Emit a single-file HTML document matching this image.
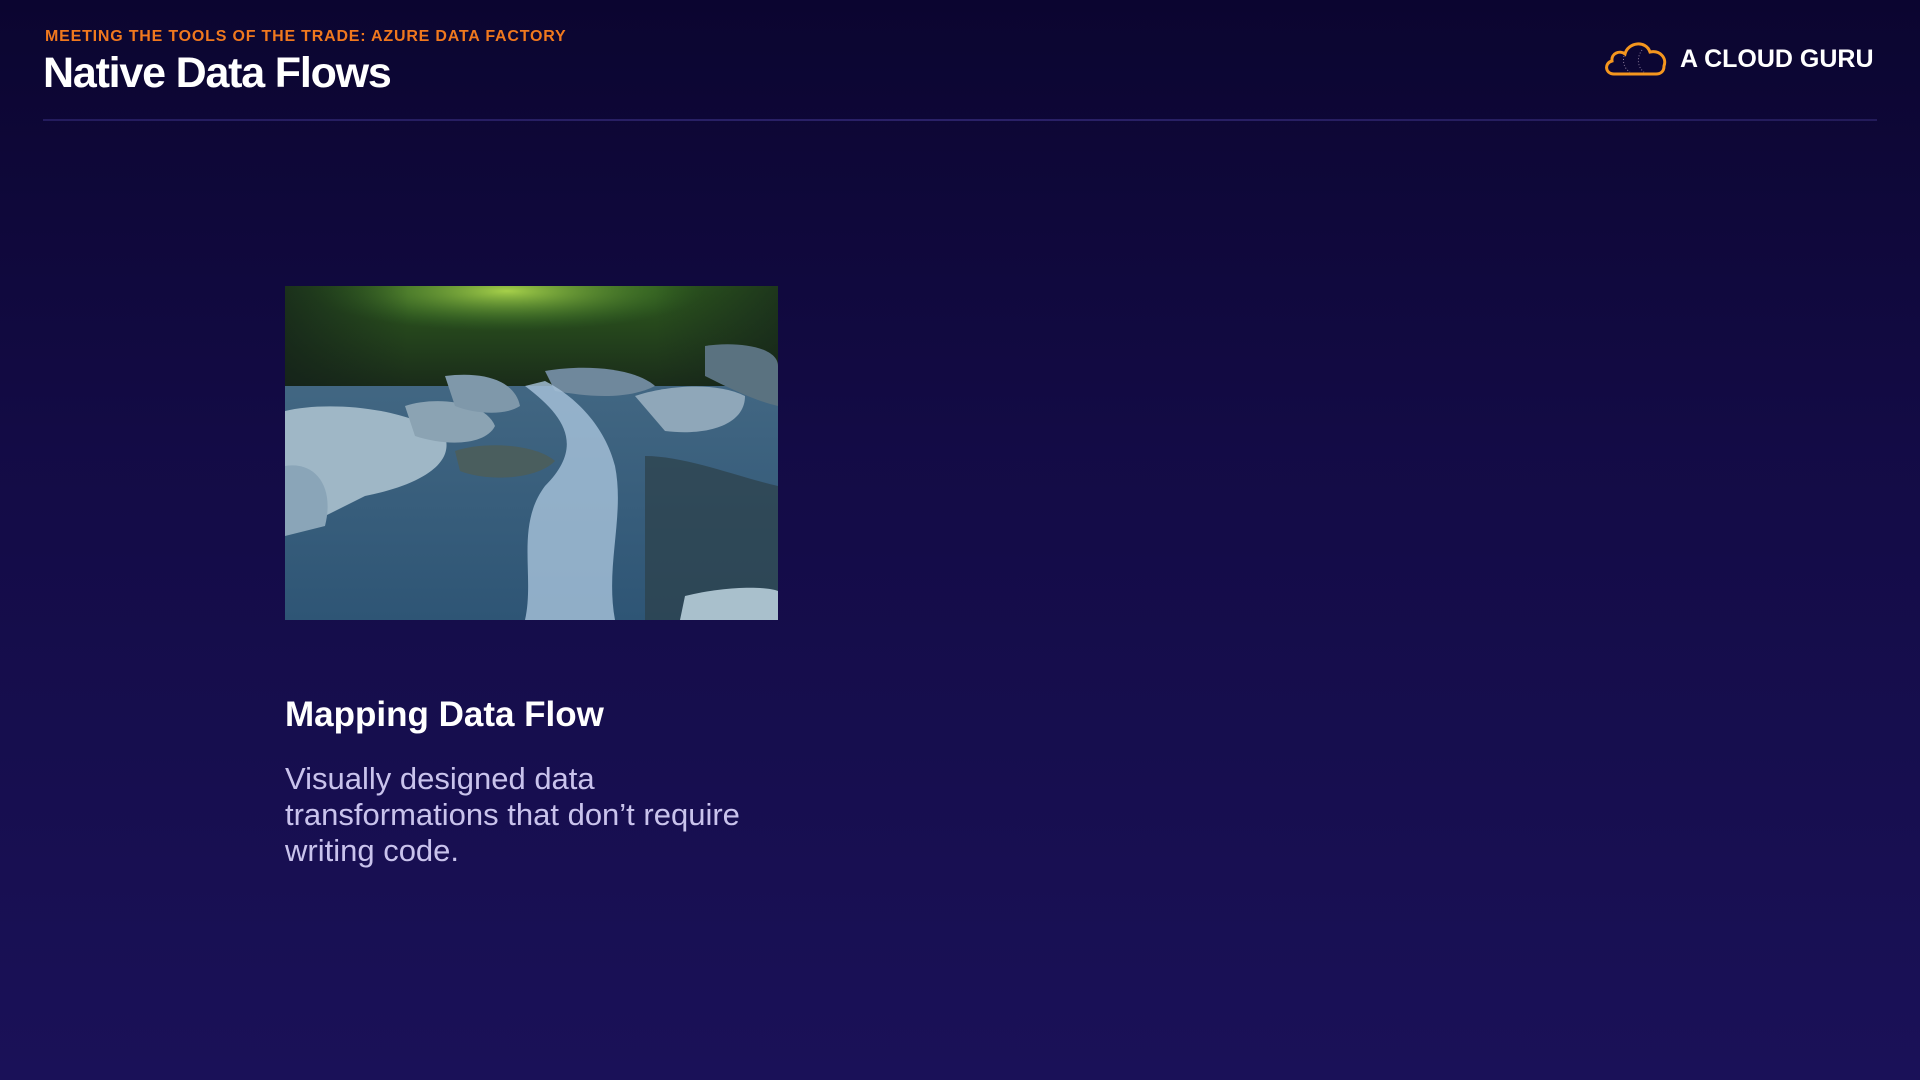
<!DOCTYPE html>
<html><head><meta charset="utf-8"><style>
html,body{margin:0;padding:0}
body{width:1920px;height:1080px;overflow:hidden;position:relative;background:linear-gradient(180deg,#0b0530 0%,#130b45 40%,#1a1158 100%);font-family:"Liberation Sans",sans-serif}
.sub{position:absolute;left:45px;top:28px;font-size:16px;font-weight:bold;color:#f0781e;letter-spacing:0.8px;white-space:nowrap}
.title{position:absolute;left:43px;top:49px;font-size:43px;font-weight:bold;color:#fff;letter-spacing:-1.2px;white-space:nowrap}
.line{position:absolute;left:43px;top:119px;width:1834px;height:2px;background:linear-gradient(90deg,#241c5e,#2a2168 50%,#231b5a)}
.logo{position:absolute;left:1680px;top:45px;font-size:25px;font-weight:bold;color:#fff;white-space:nowrap}
.h{position:absolute;left:285px;top:695px;font-size:35px;font-weight:bold;color:#fff;white-space:nowrap}
.p{position:absolute;left:285px;top:761px;font-size:31px;line-height:36px;color:#c9c3ec;width:525px}
</style></head><body>
<div class="sub">MEETING THE TOOLS OF THE TRADE: AZURE DATA FACTORY</div>
<div class="title">Native Data Flows</div>
<div class="line"></div>
<svg style="position:absolute;left:1602px;top:36px" width="68" height="42" viewBox="0 0 68 42">
<path d="M12 38 C3 38 2 27 10 25 C9 17 18 14 23 18 C26 6 44 4 48 16 C58 14 65 22 62 30 C62 36 58 38 54 38 Z" fill="none" stroke="#f5961e" stroke-width="3"/>
<path d="M22 20 C20 28 24 34 28 36 M40 14 C34 22 36 32 42 36" fill="none" stroke="#8a7a9a" stroke-width="1" stroke-dasharray="1 2"/>
</svg>
<div class="logo">A CLOUD GURU</div>
<svg style="position:absolute;left:285px;top:286px" width="493" height="334" viewBox="0 0 493 334">
<defs>
<linearGradient id="f" x1="0" y1="0" x2="0" y2="1"><stop offset="0" stop-color="#2e5a1e"/><stop offset="1" stop-color="#1a2c1a"/></linearGradient>
<radialGradient id="l" cx="0.45" cy="0.05" r="0.4"><stop offset="0" stop-color="#a6d04a"/><stop offset="1" stop-color="#3a7a2a" stop-opacity="0"/></radialGradient>
<linearGradient id="w" x1="0" y1="0" x2="0" y2="1"><stop offset="0" stop-color="#4a6e88"/><stop offset="1" stop-color="#2e5575"/></linearGradient>
<linearGradient id="s" x1="0" y1="0" x2="1" y2="0"><stop offset="0" stop-color="#13201a" stop-opacity="0.7"/><stop offset="0.25" stop-color="#13201a" stop-opacity="0"/><stop offset="0.75" stop-color="#13201a" stop-opacity="0"/><stop offset="1" stop-color="#13201a" stop-opacity="0.6"/></linearGradient>
</defs>
<rect width="493" height="334" fill="url(#w)"/>
<rect width="493" height="100" fill="url(#f)"/>
<rect width="493" height="100" fill="url(#l)"/>
<rect width="493" height="100" fill="url(#s)"/>
<path d="M0 125 C40 115 120 120 160 150 C170 180 130 200 80 210 L40 230 L0 240 Z" fill="#9fb7c6"/>
<path d="M0 180 C30 175 50 200 40 240 L0 250Z" fill="#8aa5b8"/>
<path d="M120 120 C150 110 200 115 210 140 C200 160 160 160 130 150Z" fill="#8ba3b3"/>
<path d="M160 90 C200 85 230 95 235 120 C220 130 190 128 170 120Z" fill="#7f98aa"/>
<path d="M170 165 C200 155 250 158 270 175 C250 195 200 195 175 185Z" fill="#4a5e5e"/>
<path d="M260 85 C300 78 350 82 370 100 C340 115 300 110 270 105Z" fill="#6f889c"/>
<path d="M350 110 C380 100 430 95 460 110 C460 140 420 150 380 145Z" fill="#8fa7b9"/>
<path d="M420 60 C450 55 493 60 493 80 L493 120 C470 115 440 100 420 90Z" fill="#5a7280"/>
<path d="M240 100 C280 130 300 160 260 200 C230 240 250 290 240 334 L330 334 C320 280 340 230 330 180 C320 140 290 110 260 95Z" fill="#a9c4dc" opacity="0.8"/>
<path d="M360 170 C400 170 450 190 493 200 L493 334 L360 334Z" fill="#2c4048" opacity="0.7"/>
<path d="M400 310 C440 300 480 300 493 305 L493 334 L395 334Z" fill="#a9c0cc"/>
</svg>
<div class="h">Mapping Data Flow</div>
<div class="p">Visually designed data transformations that don’t require writing code.</div>
</body></html>
